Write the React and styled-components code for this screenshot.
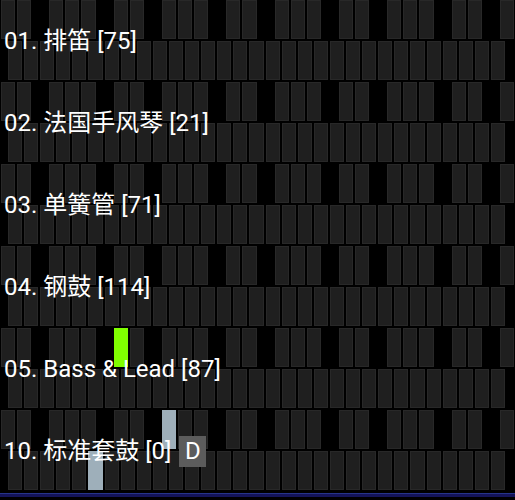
import React from "react";
import styled, { createGlobalStyle } from "styled-components";

const GlobalStyle = createGlobalStyle`
  html, body {
    margin: 0;
    padding: 0;
    background: #000;
  }
  body {
    width: 515px;
    height: 500px;
    overflow: hidden;
    font-family: Roboto, "Noto Sans CJK SC", sans-serif;
  }
`;

const Screen = styled.div`
  display: flex;
  flex-direction: column;
  width: 515px;
  height: 500px;
  background: #000;
`;

const Channel = styled.div`
  display: grid;
  height: 82px;
`;

const Keyboard = styled.div`
  grid-area: 1 / 1;
  display: grid;
  grid-template-rows: 39px 39px;
  row-gap: 2px;
  padding-bottom: 2px;
`;

const KeyRow = styled.div`
  display: grid;
  grid-template-columns: repeat(${(p) => p.$count}, 1fr);
  column-gap: 2px;
  padding: ${(p) => (p.$offset ? "0 10px 0 8px" : "0 1px")};
`;

const Key = styled.div`
  box-sizing: border-box;
  background: ${(p) => p.$color || "#1f1f1f"};
  border: 1px solid ${(p) => p.$color || "#282828"};
  visibility: ${(p) => (p.$gap ? "hidden" : "visible")};
`;

const Label = styled.div`
  grid-area: 1 / 1;
  align-self: center;
  z-index: 1;
  display: flex;
  align-items: center;
  padding-left: 4px;
  color: #fff;
  font-size: 24px;
  line-height: 1;
  white-space: nowrap;
`;

const Badge = styled.span`
  display: inline-flex;
  align-items: center;
  justify-content: center;
  width: 27px;
  height: 31px;
  margin-left: 8px;
  background: #5c5c5c;
  color: #fff;
  font-size: 24px;
`;

const StatusBar = styled.div`
  height: 3px;
  margin-top: 1px;
  background: #14145a;
  border-top: 1px solid #26348a;
`;

const BLACK_KEYS = [0, 1, 3, 4, 5];
const BLUE = "#9eafba";

const channels = [
  { label: "01. 排笛 [75]" },
  { label: "02. 法国手风琴 [21]" },
  { label: "03. 单簧管 [71]" },
  { label: "04. 钢鼓 [114]" },
  { label: "05. Bass & Lead [87]", upper: { 7: "#80ff00" } },
  { label: "10. 标准套鼓 [0]", badge: "D", upper: { 10: BLUE }, lower: { 5: BLUE } },
];

function ChannelRow({ channel }) {
  const upper = channel.upper || {};
  const lower = channel.lower || {};

  return (
    <Channel>
      <Keyboard>
        <KeyRow $count={32}>
          {Array.from({ length: 32 }, (_, i) => (
            <Key key={i} $gap={!BLACK_KEYS.includes(i % 7)} $color={upper[i]} />
          ))}
        </KeyRow>
        <KeyRow $count={31} $offset>
          {Array.from({ length: 31 }, (_, i) => (
            <Key key={i} $color={lower[i]} />
          ))}
        </KeyRow>
      </Keyboard>
      <Label>
        {channel.label}
        {channel.badge && <Badge>{channel.badge}</Badge>}
      </Label>
    </Channel>
  );
}

export default function App() {
  return (
    <Screen>
      <GlobalStyle />
      {channels.map((c) => (
        <ChannelRow key={c.label} channel={c} />
      ))}
      <StatusBar />
    </Screen>
  );
}
